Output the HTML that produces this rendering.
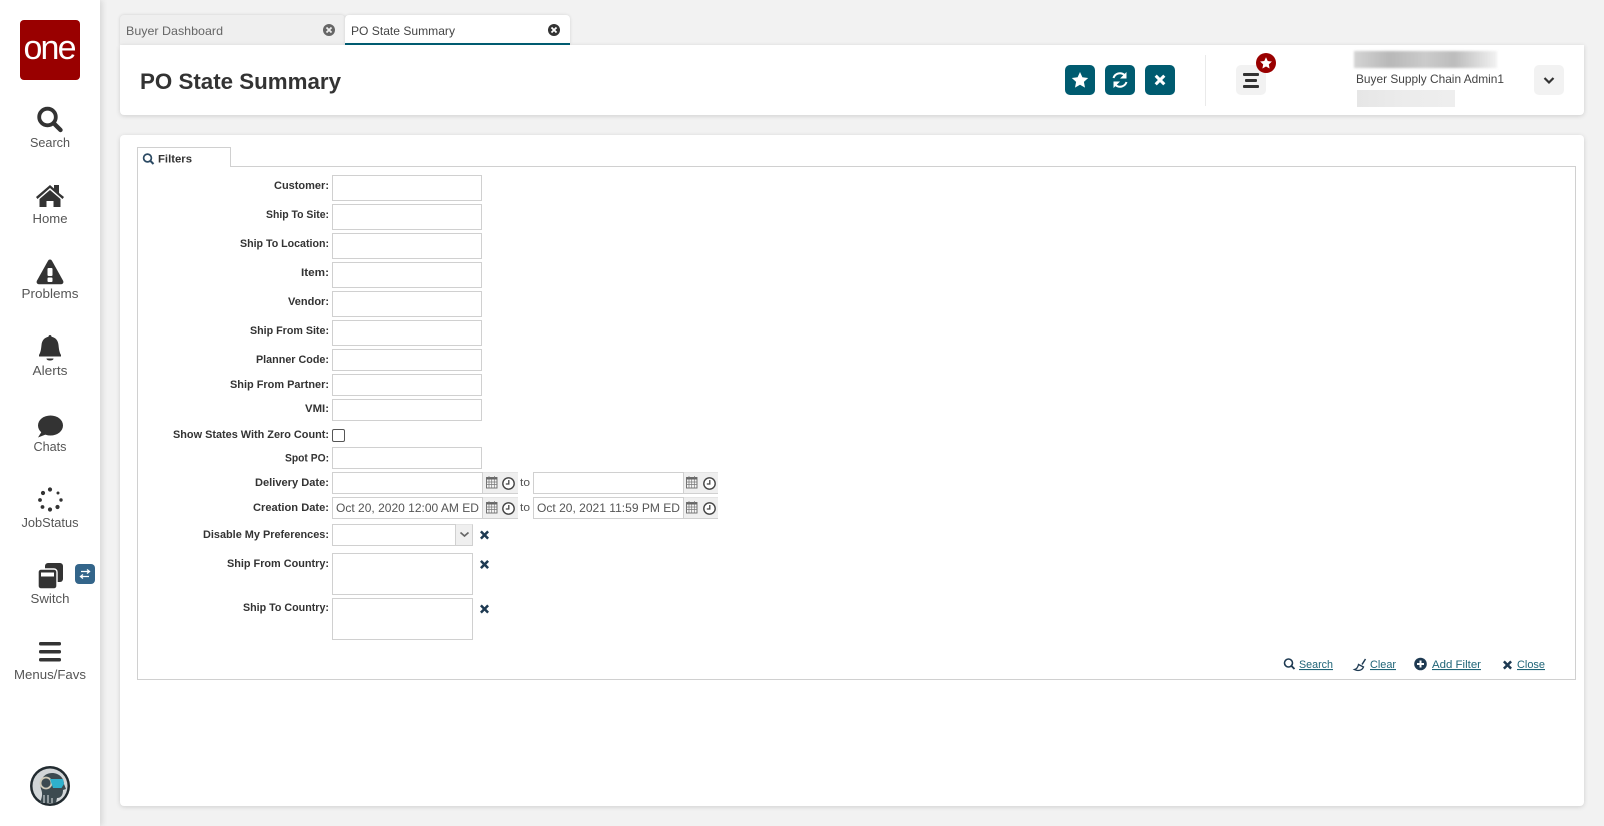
<!DOCTYPE html>
<html lang="en">
<head>
<meta charset="utf-8">
<title>PO State Summary</title>
<style>
html,body{margin:0;padding:0;width:1604px;height:826px;overflow:hidden;background:#f2f2f2;}
body{position:relative;font-family:"Liberation Sans",sans-serif;color:#333;}
div,input,textarea{box-sizing:border-box;position:absolute;}
input,textarea{margin:0;padding:0;border:1px solid #d0d0d0;background:#fff;outline:none;resize:none;border-radius:0;}
.side{left:0;top:0;width:100px;height:826px;background:#fff;box-shadow:2px 0 6px rgba(0,0,0,.12);}
.panel{background:#fff;border-radius:4px;box-shadow:0 1px 5px rgba(0,0,0,.15);}
.btn{width:30px;height:30px;top:65px;border-radius:5px;background:#005b70;}
.gbtn{width:30px;height:30px;top:65px;border-radius:5px;background:#f2f2f2;}
.cal{background:#efefef;border-bottom:1px solid #d0d0d0;border-top:1px solid #e4e4e4;}
svg.top{position:absolute;left:0;top:0;width:1604px;height:826px;pointer-events:none;}
svg text{font-family:"Liberation Sans",sans-serif;}
.l{font-size:11px;font-weight:bold;fill:#333;text-anchor:end;}
.n{font-size:13px;fill:#555;text-anchor:middle;}
.a{font-size:11px;fill:#1f6477;text-decoration:underline;}
.d{font-size:12px;fill:#555;}
</style>
</head>
<body>
<div class="side"></div>

<div style="left:120px;top:15px;width:225px;height:30px;background:#efefef;border-radius:4px 4px 0 0;box-shadow:0 0 3px rgba(0,0,0,.15);"></div>
<div style="left:345px;top:15px;width:225px;height:30px;background:#fff;border-radius:4px 4px 0 0;box-shadow:0 0 3px rgba(0,0,0,.12);"></div>
<div class="panel" style="left:120px;top:45px;width:1464px;height:70px;border-radius:0 0 4px 4px;"></div>
<div style="left:345px;top:43px;width:225px;height:2px;background:#005b70;"></div>

<div class="btn" style="left:1065px;"></div>
<div class="btn" style="left:1105px;"></div>
<div class="btn" style="left:1145px;"></div>
<div style="left:1205px;top:55px;width:1px;height:51px;background:#eaeaea;"></div>
<div class="gbtn" style="left:1236px;"></div>
<div style="left:1354px;top:51px;width:143px;height:17px;background:linear-gradient(90deg,#d4d4d4,#b8b8b8 25%,#cbcbcb 50%,#bcbcbc 70%,#f2f2f2);filter:blur(1px);"></div>
<div style="left:1357px;top:90px;width:98px;height:17px;background:linear-gradient(90deg,#e6e6e6,#ececec 50%,#eeeeee);"></div>
<div class="gbtn" style="left:1534px;"></div>

<div class="panel" style="left:120px;top:135px;width:1464px;height:671px;"></div>
<div style="left:137px;top:166px;width:1439px;height:514px;border:1px solid #d0d0d0;background:#fff;"></div>
<div style="left:137px;top:147px;width:94px;height:20px;border:1px solid #d0d0d0;border-bottom:0;background:#fff;"></div>
<div style="left:138px;top:166px;width:92px;height:1px;background:#fff;"></div>

<input type="text" style="left:332px;top:175px;width:150px;height:26px;">
<input type="text" style="left:332px;top:204px;width:150px;height:26px;">
<input type="text" style="left:332px;top:233px;width:150px;height:26px;">
<input type="text" style="left:332px;top:262px;width:150px;height:26px;">
<input type="text" style="left:332px;top:291px;width:150px;height:26px;">
<input type="text" style="left:332px;top:320px;width:150px;height:26px;">
<input type="text" style="left:332px;top:349px;width:150px;height:22px;">
<input type="text" style="left:332px;top:374px;width:150px;height:22px;">
<input type="text" style="left:332px;top:399px;width:150px;height:22px;">
<div style="left:332px;top:429px;width:13px;height:13px;border:1px solid #555;border-radius:2px;background:#fff;"></div>
<input type="text" style="left:332px;top:447px;width:150px;height:22px;">

<input type="text" style="left:332px;top:472px;width:151px;height:22px;">
<div class="cal" style="left:483px;top:472px;width:17px;height:22px;"></div>
<div class="cal" style="left:500px;top:472px;width:18px;height:22px;"></div>
<input type="text" style="left:533px;top:472px;width:151px;height:22px;">
<div class="cal" style="left:684px;top:472px;width:17px;height:22px;"></div>
<div class="cal" style="left:701px;top:472px;width:17px;height:22px;"></div>

<input type="text" style="left:332px;top:497px;width:151px;height:22px;">
<div class="cal" style="left:483px;top:497px;width:17px;height:22px;"></div>
<div class="cal" style="left:500px;top:497px;width:18px;height:22px;"></div>
<input type="text" style="left:533px;top:497px;width:151px;height:22px;">
<div class="cal" style="left:684px;top:497px;width:17px;height:22px;"></div>
<div class="cal" style="left:701px;top:497px;width:17px;height:22px;"></div>

<input type="text" style="left:332px;top:524px;width:124px;height:22px;">
<div class="cal" style="left:456px;top:524px;width:17px;height:22px;border-right:1px solid #d0d0d0;"></div>
<textarea style="left:332px;top:553px;width:141px;height:42px;"></textarea>
<textarea style="left:332px;top:598px;width:141px;height:42px;"></textarea>

<svg class="top" viewBox="0 0 1604 826" xmlns="http://www.w3.org/2000/svg">
  <defs>
    <g id="cal"><rect x=".5" y="1.500" width="10.500" height="10.500" fill="#f6f6f6" stroke="#666" stroke-width=".9"/><rect x=".5" y="1.500" width="10.500" height="2" fill="#666"/><path d="M3 0v2.500M8.500 0v2.500M.5 6h10.500M.5 8.500h10.500M3 3.500v8.500M5.700 3.500v8.500M8.300 3.500v8.500" stroke="#777" stroke-width=".7" fill="none"/></g>
    <g id="clk"><circle cx="6.500" cy="6.500" r="5.700" fill="#fff" stroke="#444" stroke-width="1.400"/><path d="M6.800 3v4H3.800" fill="none" stroke="#444" stroke-width="1.300"/></g>
    <path id="x" d="M-4.500-2.700-2.700-4.500 0-1.800 2.700-4.500 4.500-2.700 1.800 0 4.500 2.700 2.700 4.500 0 1.800-2.700 4.500-4.500 2.700-1.800 0Z"/>
    <path id="star" d="M0-8 2.400-2.700 8.200-2 3.900 1.900 5 7.600 0 4.800-5 7.600-3.900 1.900-8.200-2-2.400-2.700Z"/>
  </defs>

  <!-- logo -->
  <rect x="20" y="20" width="60" height="60" rx="4" fill="#990000"/>
  <text x="23.500" y="59" font-size="34" fill="#fff" textLength="53" lengthAdjust="spacing">one</text>

  <!-- sidebar icons -->
  <circle cx="47.500" cy="117" r="8.300" fill="none" stroke="#333" stroke-width="3.800"/>
  <path d="M54 123.500l6.500 6.500" stroke="#333" stroke-width="4.400" stroke-linecap="round" fill="none"/>
  <text class="n" x="50" y="147" textLength="40" lengthAdjust="spacingAndGlyphs">Search</text>

  <path d="M36 197 50 185 54 188.500V185h5v8l5 4-1.500 2L50 188 37.500 199Z" fill="#333"/>
  <path d="M39.500 199 50 190 60.500 199v8H53.500v-6h-7v6h-7Z" fill="#333"/>
  <text class="n" x="50" y="223" textLength="35" lengthAdjust="spacingAndGlyphs">Home</text>

  <path d="M50 259.500c1 0 1.600.6 2.100 1.500l11 19.800c.8 1.600 0 3.400-2 3.400H38.900c-2 0-2.800-1.800-2-3.400l11-19.800c.5-.9 1.100-1.500 2.100-1.500Z" fill="#333"/>
  <rect x="47.500" y="268" width="5" height="8" rx="1" fill="#fff"/><rect x="47.500" y="277.500" width="5" height="4.500" rx="1" fill="#fff"/>
  <text class="n" x="50" y="298" textLength="57" lengthAdjust="spacingAndGlyphs">Problems</text>

  <path d="M50 335c1 0 1.500.7 1.500 1.800 4.500 1 6.500 4 7 8.200.5 5 1 7.500 2.500 10v1.500H39V355c1.500-2.500 2-5 2.500-10 .5-4.200 2.500-7.200 7-8.200 0-1.100.5-1.800 1.500-1.800Z" fill="#333"/>
  <path d="M46.500 358.500h7c0 1.400-1.500 2-3.500 2s-3.500-.6-3.500-2Z" fill="#333"/>
  <text class="n" x="50" y="375" textLength="35" lengthAdjust="spacingAndGlyphs">Alerts</text>

  <ellipse cx="50.500" cy="425.500" rx="12.500" ry="10" fill="#333"/>
  <path d="M42 431 38 437.500 47 434Z" fill="#333"/>
  <text class="n" x="50" y="451" textLength="33" lengthAdjust="spacingAndGlyphs">Chats</text>

  <g fill="#333">
    <circle cx="50" cy="489.500" r="2.100"/><circle cx="43" cy="493" r="2.100"/><circle cx="58" cy="493" r="1.500"/>
    <circle cx="40" cy="500" r="1.900"/><circle cx="61" cy="500" r="1.700"/>
    <circle cx="42.500" cy="507" r="1.900"/><circle cx="57.500" cy="507" r="2.100"/><circle cx="50" cy="509.500" r="2.100"/>
  </g>
  <text class="n" x="50" y="527" textLength="57" lengthAdjust="spacingAndGlyphs">JobStatus</text>

  <rect x="45" y="563" width="18" height="19" rx="3" fill="#333"/>
  <rect x="38" y="569" width="19" height="20" rx="3" fill="#333" stroke="#fff" stroke-width="1.400"/>
  <rect x="41" y="572.500" width="13" height="4" fill="#fff"/>
  <rect x="75" y="564" width="20" height="20" rx="4" fill="#33658a"/>
  <path d="M81 571.500h8M87 569.500l2.500 2-2.500 2M89 576.500h-8M83 574.500l-2.500 2 2.500 2" stroke="#fff" stroke-width="1.300" fill="none"/>
  <text class="n" x="50" y="603" textLength="39" lengthAdjust="spacingAndGlyphs">Switch</text>

  <rect x="39" y="642" width="22" height="3.500" rx="1.500" fill="#333"/>
  <rect x="39" y="650" width="22" height="3.500" rx="1.500" fill="#333"/>
  <rect x="39" y="658" width="22" height="3.500" rx="1.500" fill="#333"/>
  <text class="n" x="50" y="679" textLength="72" lengthAdjust="spacingAndGlyphs">Menus/Favs</text>

  <!-- avatar -->
  <circle cx="50" cy="786" r="20" fill="#222b30"/>
  <circle cx="50" cy="786" r="17.500" fill="#d2d6d8"/>
  <path d="M40 803c2-6 3-9 1-14-2-9 3-16 11-16 7 0 12 5 12 11l2 5-3 1c0 5-2 8-6 8l-1 5Z" fill="#3c4a50"/>
  <circle cx="46" cy="783" r="5.500" fill="none" stroke="#cfcab8" stroke-width="1.800"/>
  <path d="M50 779h13l1 5-2.500 4H53Z" fill="#2fb0cc"/>
  <path d="M44 795v8M48 795v8M52 798v5" stroke="#c9ced0" stroke-width="1.200"/>

  <!-- tabs -->
  <text x="126" y="35" font-size="12" fill="#666" textLength="97" lengthAdjust="spacingAndGlyphs">Buyer Dashboard</text>
  <circle cx="329" cy="30" r="6" fill="#666"/><use href="#x" transform="translate(329 30) scale(.7)" fill="#efefef"/>
  <text x="351" y="35" font-size="12" fill="#444" textLength="104" lengthAdjust="spacingAndGlyphs">PO State Summary</text>
  <circle cx="554" cy="30" r="6" fill="#333"/><use href="#x" transform="translate(554 30) scale(.7)" fill="#fff"/>

  <!-- title -->
  <text x="140" y="89" font-size="22" font-weight="bold" fill="#333" textLength="201" lengthAdjust="spacingAndGlyphs">PO State Summary</text>

  <!-- header icons -->
  <use href="#star" transform="translate(1080 80)" fill="#fff"/>
  <g fill="none" stroke="#fff" stroke-width="2">
    <path d="M1113.500 78a6.800 6.800 0 0 1 11-3"/><path d="M1126.500 82a6.800 6.800 0 0 1-11 3"/>
  </g>
  <path d="M1126.500 72v6.500H1120ZM1113.500 88v-6.500H1120Z" fill="#fff"/>
  <use href="#x" transform="translate(1160 80) scale(1.2)" fill="#fff"/>
  <rect x="1243" y="73" width="16" height="3" rx="1" fill="#333"/>
  <rect x="1245" y="79" width="12" height="3" rx="1" fill="#333"/>
  <rect x="1243" y="85" width="16" height="3" rx="1" fill="#333"/>
  <circle cx="1266" cy="63" r="10" fill="#990000"/>
  <use href="#star" transform="translate(1266 63) scale(.72)" fill="#fff"/>
  <text x="1356" y="83" font-size="12" fill="#444" textLength="148" lengthAdjust="spacingAndGlyphs">Buyer Supply Chain Admin1</text>
  <path d="M1544.500 78l4.500 4.500 4.500-4.500" fill="none" stroke="#333" stroke-width="2.200"/>

  <!-- filters tab -->
  <circle cx="147.500" cy="158" r="3.900" fill="none" stroke="#2c4a63" stroke-width="1.700"/>
  <path d="M150.500 161l3 3" stroke="#2c4a63" stroke-width="2"/>
  <text x="158" y="162.500" font-size="11" font-weight="bold" fill="#333" textLength="34" lengthAdjust="spacingAndGlyphs">Filters</text>

  <!-- labels -->
  <text class="l" x="329" y="189" textLength="55" lengthAdjust="spacingAndGlyphs">Customer:</text>
  <text class="l" x="329" y="218" textLength="63" lengthAdjust="spacingAndGlyphs">Ship To Site:</text>
  <text class="l" x="329" y="247" textLength="89" lengthAdjust="spacingAndGlyphs">Ship To Location:</text>
  <text class="l" x="329" y="276" textLength="28" lengthAdjust="spacingAndGlyphs">Item:</text>
  <text class="l" x="329" y="305" textLength="41" lengthAdjust="spacingAndGlyphs">Vendor:</text>
  <text class="l" x="329" y="334" textLength="79" lengthAdjust="spacingAndGlyphs">Ship From Site:</text>
  <text class="l" x="329" y="363" textLength="73" lengthAdjust="spacingAndGlyphs">Planner Code:</text>
  <text class="l" x="329" y="388" textLength="99" lengthAdjust="spacingAndGlyphs">Ship From Partner:</text>
  <text class="l" x="329" y="412" textLength="24" lengthAdjust="spacingAndGlyphs">VMI:</text>
  <text class="l" x="329" y="438" textLength="156" lengthAdjust="spacingAndGlyphs">Show States With Zero Count:</text>
  <text class="l" x="329" y="461.500" textLength="44" lengthAdjust="spacingAndGlyphs">Spot PO:</text>
  <text class="l" x="329" y="486" textLength="74" lengthAdjust="spacingAndGlyphs">Delivery Date:</text>
  <text class="l" x="329" y="511" textLength="76" lengthAdjust="spacingAndGlyphs">Creation Date:</text>
  <text class="l" x="329" y="538" textLength="126" lengthAdjust="spacingAndGlyphs">Disable My Preferences:</text>
  <text class="l" x="329" y="567" textLength="102" lengthAdjust="spacingAndGlyphs">Ship From Country:</text>
  <text class="l" x="329" y="611" textLength="86" lengthAdjust="spacingAndGlyphs">Ship To Country:</text>

  <!-- date values -->
  <text class="d" x="336" y="512" textLength="143" lengthAdjust="spacingAndGlyphs">Oct 20, 2020 12:00 AM ED</text>
  <text class="d" x="537" y="512" textLength="143" lengthAdjust="spacingAndGlyphs">Oct 20, 2021 11:59 PM ED</text>
  <text x="520" y="486" font-size="11" fill="#555" textLength="10" lengthAdjust="spacingAndGlyphs">to</text>
  <text x="520" y="511" font-size="11" fill="#555" textLength="10" lengthAdjust="spacingAndGlyphs">to</text>

  <use href="#cal" x="486" y="476"/><use href="#clk" x="502" y="477"/>
  <use href="#cal" x="686" y="476"/><use href="#clk" x="703" y="477"/>
  <use href="#cal" x="486" y="501"/><use href="#clk" x="502" y="502"/>
  <use href="#cal" x="686" y="501"/><use href="#clk" x="703" y="502"/>

  <path d="M460.500 532.500l4 3.500 4-3.500" fill="none" stroke="#666" stroke-width="1.700"/>
  <use href="#x" transform="translate(484.500 535)" fill="#1e3a52"/>
  <use href="#x" transform="translate(484.500 564.500)" fill="#1e3a52"/>
  <use href="#x" transform="translate(484.500 609)" fill="#1e3a52"/>

  <!-- actions -->
  <circle cx="1288.500" cy="663" r="4" fill="none" stroke="#1e3a52" stroke-width="1.600"/>
  <path d="M1291.500 666l3 3" stroke="#1e3a52" stroke-width="1.900"/>
  <text class="a" x="1299" y="668" textLength="34" lengthAdjust="spacingAndGlyphs">Search</text>
  <path d="M1365.500 659l-3.500 5.500" stroke="#1e3a52" stroke-width="1.500" fill="none"/>
  <path d="M1358.500 664.500l5 2.500c-1 2.500-3 3.500-5.500 3.500-1.500 0-2.500-.5-3.500-1 2-.5 3.500-2.500 4-5Z" fill="none" stroke="#1e3a52" stroke-width="1.300"/>
  <text class="a" x="1370" y="668" textLength="26" lengthAdjust="spacingAndGlyphs">Clear</text>
  <circle cx="1420.500" cy="664" r="6.300" fill="#1e3a52"/>
  <path d="M1420.500 660.500v7M1417 664h7" stroke="#fff" stroke-width="2"/>
  <text class="a" x="1432" y="668" textLength="49" lengthAdjust="spacingAndGlyphs">Add Filter</text>
  <use href="#x" transform="translate(1507.500 665)" fill="#1e3a52"/>
  <text class="a" x="1517" y="668" textLength="28" lengthAdjust="spacingAndGlyphs">Close</text>
</svg>
</body>
</html>
